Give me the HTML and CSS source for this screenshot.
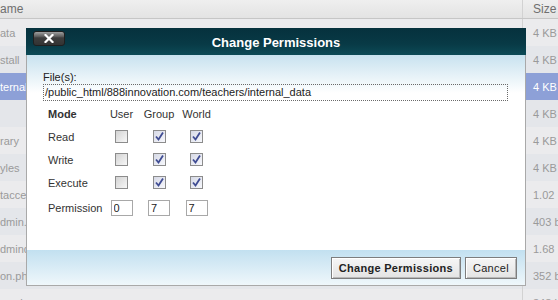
FILE: index.html
```html
<!DOCTYPE html>
<html lang="en">
<head>
  <meta charset="UTF-8" />
  <title>File Manager - Change Permissions</title>
  <link rel="stylesheet" href="styles.css">
</head>
<body>
  <div class="filelist">
    <div class="row head"><div class="name">ame</div><div class="size">Size</div></div>
    <div class="row"><div class="name">ata</div><div class="size">4 KB</div></div>
    <div class="row alt"><div class="name">stall</div><div class="size">4 KB</div></div>
    <div class="row selected"><div class="name">ternal</div><div class="size">4 KB</div></div>
    <div class="row alt"><div class="name"></div><div class="size">4 KB</div></div>
    <div class="row"><div class="name">rary</div><div class="size">4 KB</div></div>
    <div class="row alt"><div class="name">yles</div><div class="size">4 KB</div></div>
    <div class="row"><div class="name">tacce</div><div class="size">1.02</div></div>
    <div class="row alt"><div class="name">dmin.p</div><div class="size">403 b</div></div>
    <div class="row"><div class="name">dminda</div><div class="size">1.68</div></div>
    <div class="row alt"><div class="name">on.ph</div><div class="size">352 b</div></div>
    <div class="row"><div class="name">ss.ph</div><div class="size">348 b</div></div>
  </div>

  <div class="dialog">
    <div class="dialog-title">
      <button class="close" type="button">
        <svg width="10" height="9" viewBox="0 0 10 9"><path d="M1.5 1 L8.5 8 M8.5 1 L1.5 8" stroke="#fff" stroke-width="2.2" stroke-linecap="square"/></svg>
      </button>
      <h2>Change Permissions</h2>
    </div>

    <div class="dialog-body">
      <div class="file-label">File(s):</div>
      <div class="path">/public_html/888innovation.com/teachers/internal_data</div>

      <div class="perms">
        <div class="mode">Mode</div>
        <div class="col">User</div>
        <div class="col">Group</div>
        <div class="col">World</div>

        <div>Read</div>
        <div class="col"><span class="cb"></span></div>
        <div class="col"><span class="cb on"><svg width="11" height="11" viewBox="0 0 11 11"><path d="M2 5.5 L4.5 8.5 L9 1.5" fill="none" stroke="#3f4c93" stroke-width="1.8"/></svg></span></div>
        <div class="col"><span class="cb on"><svg width="11" height="11" viewBox="0 0 11 11"><path d="M2 5.5 L4.5 8.5 L9 1.5" fill="none" stroke="#3f4c93" stroke-width="1.8"/></svg></span></div>

        <div>Write</div>
        <div class="col"><span class="cb"></span></div>
        <div class="col"><span class="cb on"><svg width="11" height="11" viewBox="0 0 11 11"><path d="M2 5.5 L4.5 8.5 L9 1.5" fill="none" stroke="#3f4c93" stroke-width="1.8"/></svg></span></div>
        <div class="col"><span class="cb on"><svg width="11" height="11" viewBox="0 0 11 11"><path d="M2 5.5 L4.5 8.5 L9 1.5" fill="none" stroke="#3f4c93" stroke-width="1.8"/></svg></span></div>

        <div>Execute</div>
        <div class="col"><span class="cb"></span></div>
        <div class="col"><span class="cb on"><svg width="11" height="11" viewBox="0 0 11 11"><path d="M2 5.5 L4.5 8.5 L9 1.5" fill="none" stroke="#3f4c93" stroke-width="1.8"/></svg></span></div>
        <div class="col"><span class="cb on"><svg width="11" height="11" viewBox="0 0 11 11"><path d="M2 5.5 L4.5 8.5 L9 1.5" fill="none" stroke="#3f4c93" stroke-width="1.8"/></svg></span></div>

        <div>Permission</div>
        <div class="col"><input type="text" value="0" /></div>
        <div class="col"><input type="text" value="7" /></div>
        <div class="col"><input type="text" value="7" /></div>
      </div>
    </div>

    <div class="dialog-foot">
      <button class="btn primary" type="button">Change Permissions</button>
      <button class="btn" type="button">Cancel</button>
    </div>
  </div>
</body>
</html>
```

FILE: styles.css
```css
body {
  margin: 0;
  background-color: #e6e6e6;
  font-family: "Liberation Sans", Arial, sans-serif;
  overflow: hidden;
}

/* file list behind the dialog */
.filelist {
  width: 100%;
}

.row {
  display: grid;
  grid-template-columns: 523px 1fr;
  height: 27px;
  background: #ebebed;
  color: #9a9a9a;
  font-size: 11px;
}

.row.alt {
  background: #e4e6ea;
}

.row.selected {
  background: #8da0d7;
  color: #fff;
}

.row.head {
  height: 18px;
  background: linear-gradient(#efefef, #e3e3e3);
  border-bottom: 1px solid #c6c6c6;
  color: #6f6f6f;
  font-size: 12px;
}

.row .name,
.row .size {
  display: flex;
  align-items: center;
  white-space: nowrap;
  overflow: hidden;
}

.row .name {
  border-right: 1px solid #d2d2d2;
}

.row .size {
  padding-left: 10px;
}

/* dialog */
.dialog {
  position: absolute;
  left: 26px;
  top: 28px;
  width: 500px;
}

.dialog-title {
  position: relative;
  height: 27px;
  background: linear-gradient(#06313d, #083a46 60%, #0c4a56);
  display: flex;
  align-items: center;
  justify-content: center;
}

.dialog-title h2 {
  margin: 0;
  color: #fff;
  font-size: 13px;
  font-weight: bold;
  padding-top: 1px;
}

.close {
  position: absolute;
  left: 7px;
  top: 3px;
  width: 32px;
  height: 15px;
  padding: 0;
  border: 1px solid #1f1f1f;
  border-radius: 3px;
  background: linear-gradient(#a0a0a0, #5c5c5c 35%, #3d3d3d 45%, #333);
  display: flex;
  align-items: center;
  justify-content: center;
}

.dialog-body {
  height: 195px;
  box-sizing: border-box;
  padding: 16px 17px 0 16px;
  background: linear-gradient(#c8e2ef, #ffffff 38px);
  border-left: 1px solid #a9a9a9;
  border-right: 1px solid #a9a9a9;
  font-size: 11px;
  color: #222;
}

.file-label {
  line-height: 13px;
}

.path {
  height: 17px;
  box-sizing: border-box;
  border: 1px dotted #6a6a6a;
  padding: 0 1px;
  line-height: 15px;
  white-space: nowrap;
}

.perms {
  display: grid;
  grid-template-columns: 49.5px 27px 27px 27px;
  grid-template-rows: 23px 23px 23px 23px 28px;
  column-gap: 10.5px;
  align-items: center;
  margin: 1px 0 0 5px;
  color: #333;
}

.perms .mode {
  font-weight: bold;
}

.perms .col {
  display: flex;
  justify-content: center;
  white-space: nowrap;
}

.cb {
  width: 13px;
  height: 13px;
  box-sizing: border-box;
  border: 1px solid #8c8c8c;
  background: linear-gradient(135deg, #d3d3d3, #f7f7f7);
  display: flex;
  align-items: center;
  justify-content: center;
}

.cb.on {
  background: linear-gradient(135deg, #d6d9e6, #f7f8fc);
}

.perms input {
  width: 22px;
  height: 16px;
  box-sizing: border-box;
  border: 1px solid #a8a8a8;
  padding: 0 2px;
  font-family: "Liberation Sans", Arial, sans-serif;
  font-size: 11px;
  color: #222;
}

.dialog-foot {
  height: 36px;
  box-sizing: border-box;
  padding: 7px 8px 0 0;
  display: flex;
  justify-content: flex-end;
  gap: 4px;
  background: linear-gradient(#c2e0f0, #eff7fb);
  border: 1px solid #a9a9a9;
  border-top: none;
}

.btn {
  height: 22px;
  padding: 0 7px;
  border: 1px solid #7d7d7d;
  background: linear-gradient(#f6f6f6, #e3e3e3);
  box-shadow: inset 1px 1px 0 #fff, inset -1px -1px 0 #b8b8b8;
  font-family: "Liberation Sans", Arial, sans-serif;
  font-size: 11px;
  letter-spacing: 0.3px;
  color: #222;
  cursor: pointer;
}

.btn.primary {
  font-weight: bold;
}
```
